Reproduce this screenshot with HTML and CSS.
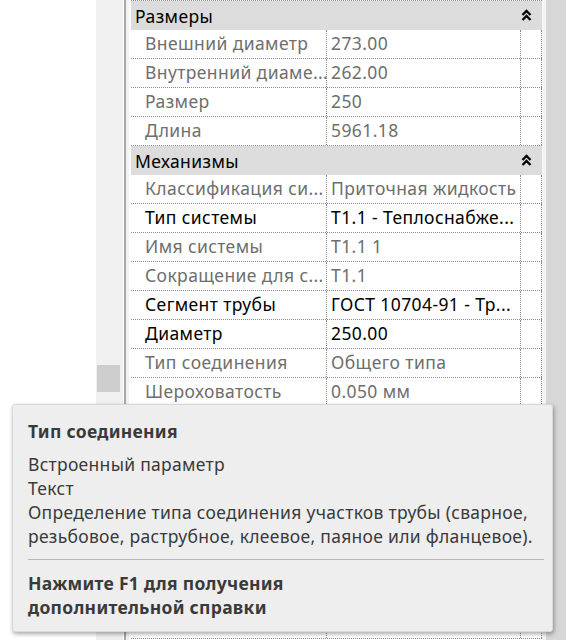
FILE: index.html
```html
<!DOCTYPE html>
<html lang="ru">
<head>
<meta charset="utf-8">
<link rel="stylesheet" href="styles.css">
</head>
<body>
<div class="app">
  <div class="blank"></div>
  <div class="track"><div class="thumb"></div></div>
  <div class="gutter"></div>
  <div class="grid">
    <div class="group"><span>Размеры</span><svg class="chev" width="11" height="13" viewBox="0 0 11 13"><path d="M1.5 6 L5.5 2 L9.5 6 M1.5 11 L5.5 7 L9.5 11" fill="none" stroke="#000" stroke-width="2.3"/></svg></div>
    <div class="row ro"><div class="k">Внешний диаметр</div><div class="v">273.00</div><div class="x"></div></div>
    <div class="row ro"><div class="k">Внутренний диаме...</div><div class="v">262.00</div><div class="x"></div></div>
    <div class="row ro"><div class="k">Размер</div><div class="v">250</div><div class="x"></div></div>
    <div class="row ro"><div class="k">Длина</div><div class="v">5961.18</div><div class="x"></div></div>
    <div class="group"><span>Механизмы</span><svg class="chev" width="11" height="13" viewBox="0 0 11 13"><path d="M1.5 6 L5.5 2 L9.5 6 M1.5 11 L5.5 7 L9.5 11" fill="none" stroke="#000" stroke-width="2.3"/></svg></div>
    <div class="row ro"><div class="k">Классификация си...</div><div class="v">Приточная жидкость</div><div class="x"></div></div>
    <div class="row"><div class="k">Тип системы</div><div class="v">Т1.1 - Теплоснабже...</div><div class="x"></div></div>
    <div class="row ro"><div class="k">Имя системы</div><div class="v">Т1.1 1</div><div class="x"></div></div>
    <div class="row ro"><div class="k">Сокращение для с...</div><div class="v">Т1.1</div><div class="x"></div></div>
    <div class="row"><div class="k">Сегмент трубы</div><div class="v">ГОСТ 10704-91 - Тр...</div><div class="x"></div></div>
    <div class="row"><div class="k">Диаметр</div><div class="v">250.00</div><div class="x"></div></div>
    <div class="row ro"><div class="k">Тип соединения</div><div class="v">Общего типа</div><div class="x"></div></div>
    <div class="row ro"><div class="k">Шероховатость</div><div class="v">0.050 мм</div><div class="x"></div></div>
    <div class="row ro"><div class="k">Материал</div><div class="v">Сталь</div><div class="x"></div></div>
    <div class="row ro"><div class="k">Номер сегмента</div><div class="v">1</div><div class="x"></div></div>
    <div class="row ro"><div class="k">Сегмент</div><div class="v">1</div><div class="x"></div></div>
    <div class="row ro"><div class="k">Расход</div><div class="v">0.0 л/с</div><div class="x"></div></div>
    <div class="row ro"><div class="k">Скорость</div><div class="v">0.0 м/с</div><div class="x"></div></div>
    <div class="row ro"><div class="k">Объем</div><div class="v">307.01 л</div><div class="x"></div></div>
    <div class="row ro"><div class="k">Площадь</div><div class="v">5.11 м²</div><div class="x"></div></div>
    <div class="row ro"><div class="k">Уклон</div><div class="v">0.00%</div><div class="x"></div></div>
  </div>
  <div class="edge"></div>
  <div class="side"></div>

  <div class="tip">
    <div class="tip-title">Тип соединения</div>
    <div class="tip-body">
      <div>Встроенный параметр</div>
      <div>Текст</div>
      <div>Определение типа соединения участков трубы (сварное,<br>резьбовое, раструбное, клеевое, паяное или фланцевое).</div>
    </div>
    <div class="tip-sep"></div>
    <div class="tip-help">Нажмите F1 для получения<br>дополнительной справки</div>
  </div>
</div>
</body>
</html>
```

FILE: styles.css
```css
html, body {
  margin: 0;
  padding: 0;
  background: #ffffff;
}
body {
  font-family: "Noto Sans", "Open Sans", sans-serif;
  font-size: 17.5px;
  letter-spacing: 0.4px;
  width: 566px;
  height: 640px;
  overflow: hidden;
}
.app {
  position: relative;
  display: flex;
  height: 640px;
  overflow: hidden;
}
.blank {
  width: 96px;
  flex: none;
  background: #ffffff;
}
.track {
  width: 27px;
  flex: none;
  background: #f0f0f0;
  padding-top: 365px;
  box-sizing: border-box;
}
.thumb {
  width: 23px;
  height: 27px;
  margin-left: 1px;
  background: #cdcdcd;
}
.gutter {
  width: 3px;
  flex: none;
  background: #f2f2f2;
  border-left: 2px solid #a6a6a6;
  margin-left: 1px;
}
.grid {
  width: 411px;
  flex: none;
  border-top: 1px dotted #8a8a8a;
  box-sizing: border-box;
  margin-left: 2px;
}
.group {
  height: 29px;
  background: #dcdcdc;
  display: flex;
  align-items: center;
  justify-content: space-between;
  padding: 0 10px 0 4px;
  color: #000;
}
.chev {
  display: block;
}
.row {
  display: grid;
  grid-template-columns: 196px 194px 21px;
  height: 29px;
  box-sizing: border-box;
  border-bottom: 1px dotted #8a8a8a;
  color: #000;
  line-height: 27px;
}
.row > div {
  white-space: nowrap;
  overflow: hidden;
  box-sizing: border-box;
  border-right: 1px dotted #8a8a8a;
}
.row .k {
  padding-left: 14px;
  overflow: visible;
}
.row .v {
  padding-left: 4px;
}
.row.ro {
  color: #6e6e6e;
}
.edge {
  width: 4px;
  flex: none;
  background: #f4f4f4;
}
.side {
  flex: 1;
  background: #d7d7d7;
}
.tip {
  position: absolute;
  left: 12px;
  top: 404px;
  width: 541px;
  height: 228px;
  box-sizing: border-box;
  background: #eeeeee;
  border: 1px solid #d9d9d9;
  border-radius: 3px;
  box-shadow: 1px 2px 4px rgba(0, 0, 0, 0.35);
  padding: 14px 6px 0 15px;
  color: #3a3a3a;
  line-height: 24px;
  letter-spacing: 0.29px;
  white-space: nowrap;
}
.tip-title {
  font-weight: bold;
  margin-bottom: 9px;
}
.tip-sep {
  height: 1px;
  background: #b8b8b8;
  margin: 11px 2px 11px 0;
}
.tip-help {
  font-weight: bold;
}
```
